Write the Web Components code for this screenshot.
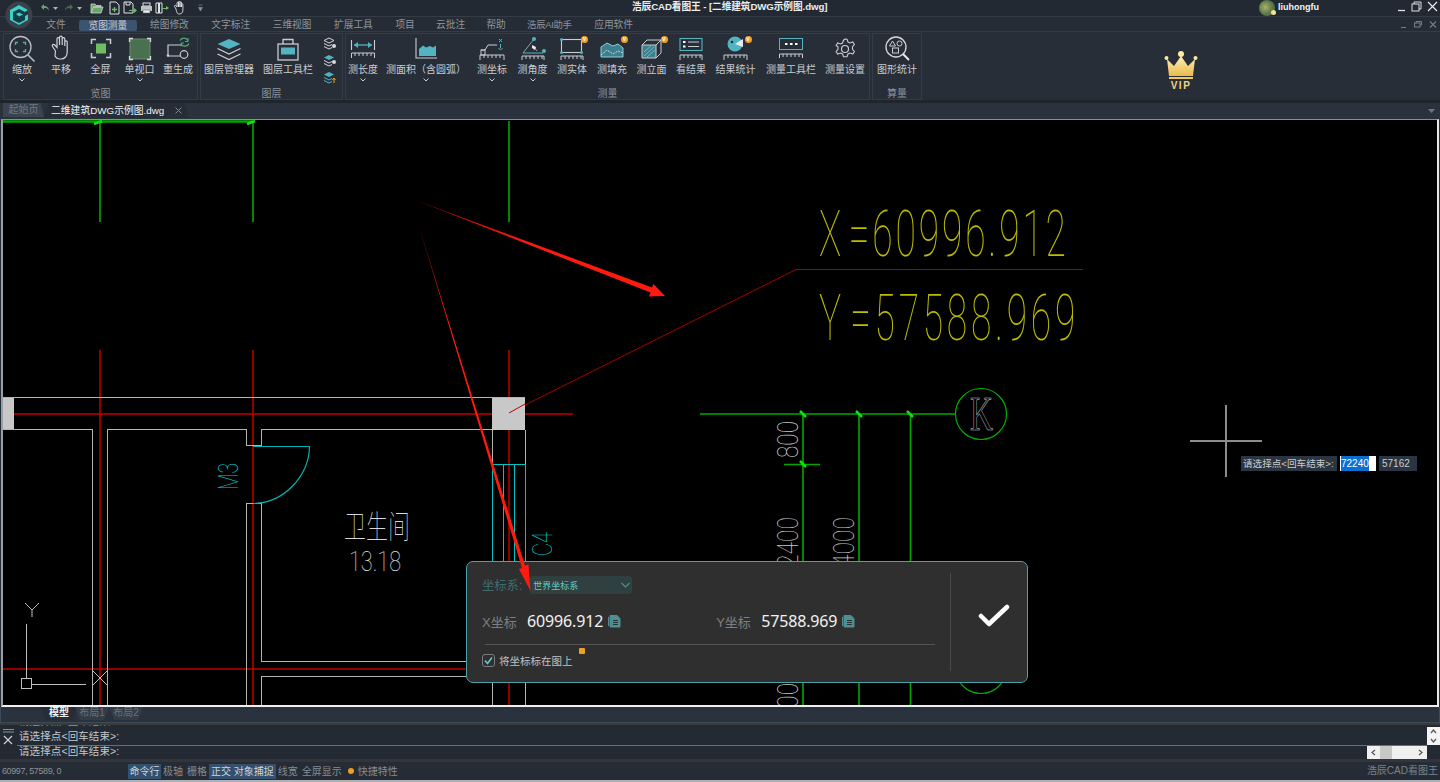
<!DOCTYPE html>
<html lang="zh"><head><meta charset="utf-8"><title>浩辰CAD看图王</title>
<style>
html,body{margin:0;height:100%;background:#262d37;overflow:hidden}
body{font:10px "Liberation Sans","Noto Sans CJK SC",sans-serif;color:#c4c8cd}
cad-app{height:782px}
svg{display:block}
</style></head><body>
<cad-app>
 <cad-titlebar title-text="浩辰CAD看图王 - [二维建筑DWG示例图.dwg]" user="liuhongfu"></cad-titlebar>
 <cad-menubar></cad-menubar>
 <cad-ribbon>
  <rb-group w="195" title="览图">
   <rb-btn w="38" caret>缩放<svg slot="icon" width="30" height="29" viewBox="0 0 30 29"><circle cx="13.500" cy="13" r="10.500" fill="none" stroke="#b9bec4" stroke-width="1.300"/><path d="M21 21l6.500 6.500" stroke="#b9bec4" stroke-width="1.600"/><path d="M8.500 11V8.500H11M16 8.500h2.500V11M18.500 15v2.500H16M11 17.500H8.500V15" fill="none" stroke="#4fb0a8" stroke-width="1.300"/></svg></rb-btn>
   <rb-btn w="40">平移<svg slot="icon" width="30" height="29" viewBox="0 0 30 29"><path d="M9.500 17l-3-4.500c-1-1.800 1-3 2.300-1.500l2.200 2.500V5c0-1.800 2.500-1.800 2.500 0v6-7.500c0-1.800 2.700-1.800 2.700 0V11 5c0-1.800 2.600-1.800 2.600 0v7-4c0-1.600 2.400-1.600 2.400 0v10c0 4-2.500 7-6 7h-1.500c-2.500 0-3.800-1.500-4.700-3z" fill="none" stroke="#cfd2d6" stroke-width="1.200"/></svg></rb-btn>
   <rb-btn w="39">全屏<svg slot="icon" width="30" height="29" viewBox="0 0 30 29"><path d="M5.500 10V5.500H10M20 5.500h4.500V10M24.500 19v4.500H20M10 23.500H5.500V19" fill="none" stroke="#c9cdd1" stroke-width="1.500"/><rect x="10" y="9.500" width="10" height="10" fill="#6fbd62"/></svg></rb-btn>
   <rb-btn w="39" caret>单视口<svg slot="icon" width="30" height="29" viewBox="0 0 30 29"><rect x="5" y="5" width="20" height="20" fill="#4b7050" stroke="#6c8a70"/><path d="M4.500 8V4.500H8M22 4.500h3.500V8M25.500 22v3.500H22M8 25.500H4.500V22" fill="none" stroke="#d5d8da" stroke-width="1.300"/></svg></rb-btn>
   <rb-btn w="38">重生成<svg slot="icon" width="30" height="29" viewBox="0 0 30 29"><path d="M19 11H5v11h13" fill="none" stroke="#c9cdd1" stroke-width="1.200"/><circle cx="21" cy="20.500" r="3.800" fill="none" stroke="#c9cdd1" stroke-width="1.200"/><circle cx="5" cy="21.500" r="1.300" fill="#c9cdd1"/><path d="M17 6.500a4.500 4.500 0 0 1 8 0M26 9.500a4.500 4.500 0 0 1-8 .5" fill="none" stroke="#4fb56a" stroke-width="1.300"/><path d="M25 4v3.500h-3M18 12v-3h3" fill="none" stroke="#4fa8b0" stroke-width="1"/></svg></rb-btn>
  </rb-group>
  <rb-group w="143" title="图层">
   <rb-btn w="58">图层管理器<svg slot="icon" width="30" height="29" viewBox="0 0 30 29"><path d="M15 5l11.500 5L15 15 3.500 10z" fill="#54b3c1"/><path d="M3.500 14.500L15 20l11.500-5.500M3.500 20L15 25.500 26.500 20" fill="none" stroke="#c9cdd1" stroke-width="1.300"/></svg></rb-btn>
   <rb-btn w="60">图层工具栏<svg slot="icon" width="30" height="29" viewBox="0 0 30 29"><rect x="5" y="10" width="20" height="16" fill="none" stroke="#c9cdd1" stroke-width="1.300"/><path d="M10 10V5.500h10V10" fill="none" stroke="#c9cdd1" stroke-width="1.300"/><rect x="8" y="13.500" width="14" height="7" fill="#54b3c1"/></svg></rb-btn>
   <rb-smalls></rb-smalls>
  </rb-group>
  <rb-group w="525" title="测量">
   <rb-btn w="36" caret>测长度<svg slot="icon" width="30" height="29" viewBox="0 0 30 29"><path d="M3.500 6v10M26.500 6v10" stroke="#c9cdd1" stroke-width="1.100"/><path d="M6 11h18" stroke="#54b3c1" stroke-width="1.300"/><path d="M6 11l4-3v6zM24 11l-4-3v6z" fill="#54b3c1"/><path d="M3.500 24v-5h23v5M7 19v3M11 19v3M15 19v3M19 19v3M23 19v3" fill="none" stroke="#c9cdd1"/></svg></rb-btn>
   <rb-btn w="90" caret>测面积（含圆弧）<svg slot="icon" width="30" height="29" viewBox="0 0 30 29"><path d="M5 4v20h21" fill="none" stroke="#c9cdd1" stroke-width="1.100"/><path d="M8 22V15l4-3.500 3 2 4-1.500 3 1.500 3-2V22z" fill="#54b3c1"/></svg></rb-btn>
   <rb-btn w="42" caret>测坐标<svg slot="icon" width="30" height="29" viewBox="0 0 30 29"><path d="M4 16h4l3-5h9" fill="none" stroke="#c9cdd1"/><path d="M22 5l3 3m0-3l-3 3M23.500 14v-4M21.500 14l2 2 2-2" fill="none" stroke="#54b3c1"/><rect x="4" y="16" width="4" height="5" fill="none" stroke="#c9cdd1"/><path d="M3 26v-5h24v5M7 21v3M11 21v3M15 21v3M19 21v3M23 21v3" fill="none" stroke="#c9cdd1"/></svg></rb-btn>
   <rb-btn w="39" caret>测角度<svg slot="icon" width="30" height="29" viewBox="0 0 30 29"><path d="M5 19L16 5M16 13l3 4" fill="none" stroke="#8fa3a8"/><circle cx="16" cy="5" r="2" fill="#54b3c1"/><circle cx="26" cy="17" r="2" fill="#54b3c1"/><path d="M14 11l4 2-1 3-3-2z" fill="#e8eaec"/><path d="M5 19h20" stroke="#54b3c1"/><path d="M4 26v-4h22v4M8 22v3M12 22v3M16 22v3M20 22v3M24 22v3" fill="none" stroke="#c9cdd1"/></svg></rb-btn>
   <rb-btn w="40" badge>测实体<svg slot="icon" width="30" height="29" viewBox="0 0 30 29"><rect x="4.500" y="5.500" width="20" height="13" fill="none" stroke="#c9cdd1" stroke-width="1.100"/><circle cx="4.500" cy="5.500" r="1.500" fill="#54b3c1"/><circle cx="4.500" cy="18.500" r="1.500" fill="#54b3c1"/><circle cx="24.500" cy="18.500" r="1.500" fill="#54b3c1"/><path d="M4 26v-4h22v4M8 22v3M12 22v3M16 22v3M20 22v3M24 22v3" fill="none" stroke="#c9cdd1"/></svg></rb-btn>
   <rb-btn w="40" badge>测填充<svg slot="icon" width="30" height="29" viewBox="0 0 30 29"><path d="M4 23V13l6-4 6 3 5-2 5 4v9z" fill="#3d7f8c" stroke="#8fd0d8"/><path d="M4 21l6-5 6 4 5-3 5 2" fill="none" stroke="#b9dfe4" stroke-dasharray="2 1"/></svg></rb-btn>
   <rb-btn w="39" badge>测立面<svg slot="icon" width="30" height="29" viewBox="0 0 30 29"><path d="M5 11h14v13H5z" fill="#3d7f8c" stroke="#c9cdd1"/><path d="M5 11l5-5h14v13l-5 5M19 11l5-5" fill="none" stroke="#c9cdd1"/><path d="M7 22l10-9M7 18l7-6M10 23l8-7" stroke="#8fd0d8" stroke-width=".7"/></svg></rb-btn>
   <rb-btn w="40">看结果<svg slot="icon" width="30" height="29" viewBox="0 0 30 29"><rect x="4" y="4.500" width="22" height="12" fill="none" stroke="#54b3c1" stroke-width="1.100"/><path d="M7 8h2.500M7 12.500h2.500" stroke="#fff" stroke-width="2"/><path d="M12 8h11M12 12.500h11" stroke="#c9cdd1"/><path d="M4 26v-5h22v5M8 21v3M12 21v3M16 21v3M20 21v3M24 21v3" fill="none" stroke="#c9cdd1"/></svg></rb-btn>
   <rb-btn w="49" badge>结果统计<svg slot="icon" width="30" height="29" viewBox="0 0 30 29"><circle cx="14" cy="10" r="7.500" fill="#54b3c1"/><path d="M14 10l8-5v8z" fill="#e8eaec"/><circle cx="11" cy="8" r="1.300" fill="#262d37"/><path d="M3 26v-5h23v5M7 21v3M11 21v3M15 21v3M19 21v3M23 21v3" fill="none" stroke="#c9cdd1"/></svg></rb-btn>
   <rb-btn w="62">测量工具栏<svg slot="icon" width="30" height="29" viewBox="0 0 30 29"><rect x="3.500" y="4.500" width="23" height="11" fill="none" stroke="#54b3c1"/><path d="M9 10h2.500M14 10h2.500M19 10h2.500" stroke="#fff" stroke-width="2.200"/><path d="M3.500 24v-4h23v4M7 20v3M11 20v3M15 20v3M19 20v3M23 20v3" fill="none" stroke="#c9cdd1"/></svg></rb-btn>
   <rb-btn w="46">测量设置<svg slot="icon" width="30" height="29" viewBox="0 0 30 29"><path d="M15 5l2 .2 1 2.800 2 1 2.800-1 1.600 2.500-1.900 2.200v2.600l1.900 2.200-1.600 2.500-2.800-1-2 1-1 2.800h-3.500l-1-2.800-2-1-2.800 1-1.600-2.500 1.900-2.200v-2.600L6.100 11.500l1.600-2.500 2.800 1 2-1 1-2.800z" fill="none" stroke="#c9cdd1" stroke-width="1.100"/><circle cx="15" cy="15" r="3.500" fill="none" stroke="#c9cdd1" stroke-width="1.200"/></svg></rb-btn>
  </rb-group>
  <rb-group w="50" title="算量">
   <rb-btn w="50">图形统计<svg slot="icon" width="30" height="29" viewBox="0 0 30 29"><circle cx="14" cy="13" r="10" fill="none" stroke="#d5d8da" stroke-width="1.300"/><path d="M21 20l6 6" stroke="#e8eaec" stroke-width="2"/><path d="M10.500 7l3 5h-6z" fill="none" stroke="#c9cdd1"/><circle cx="17.500" cy="9.500" r="2.500" fill="none" stroke="#c9cdd1"/><rect x="10.500" y="14" width="6" height="5" fill="none" stroke="#c9cdd1"/></svg></rb-btn>
  </rb-group>
  <vip-badge></vip-badge>
 </cad-ribbon>
 <cad-doctabs></cad-doctabs>
 <cad-canvas></cad-canvas>
 <cad-layouttabs></cad-layouttabs>
 <cad-cmdline></cad-cmdline>
 <cad-statusbar></cad-statusbar>
</cad-app>
<script>
const CJK='"Noto Sans CJK SC",sans-serif';
const def=(name,html,setup)=>customElements.define(name,class extends HTMLElement{
  connectedCallback(){ if(this.shadowRoot) return; const r=this.attachShadow({mode:'open'});
    r.innerHTML=typeof html==='function'?html(this):html; if(setup)setup(this,r);} });

def('cad-app',`<style>:host{display:flex;flex-direction:column;width:1440px;overflow:hidden}</style><slot></slot>`);

def('cad-titlebar',h=>`<style>
:host{display:flex;align-items:center;height:16px;background:#232932;position:relative;flex:none;border-bottom:1px solid #343c46;box-sizing:content-box}
.logo{position:absolute;left:4px;top:1px;z-index:3}
.qat{display:flex;align-items:center;padding-left:40px;gap:0;position:absolute;left:0;top:0;height:15px}
.qat svg{margin-right:2.500px}
.t{position:absolute;left:632px;top:0;line-height:13px;font-size:9.700px;font-weight:700;color:#eceef0;white-space:nowrap;letter-spacing:-.1px}
.u{position:absolute;left:1278px;top:0;font:700 9px/14px "Liberation Sans",sans-serif;color:#f2f4f6}
.av{position:absolute;left:1259px;top:0;width:16px;height:16px;border-radius:50%;background:radial-gradient(circle at 40% 45%,#aab26a 0,#5f7a4a 50%,#3c5a48 100%)}
.av:after{content:"";position:absolute;right:-1px;bottom:1px;width:5px;height:5px;border-radius:50%;background:#f5e48a}
.w{position:absolute;right:2px;top:1px;display:flex;gap:5px;align-items:center}
</style>
<svg class="logo" width="30" height="28" viewBox="0 0 30 28"><circle cx="15" cy="14" r="13.500" fill="#3a4149"/><path d="M15 4l9 5v10l-9 5-9-5V9z" fill="#143f46"/><path d="M15 4l9 5-3 2-6-3-6 3v8l6 3 6-3v-4l3-1.500V19l-9 5-9-5V9z" fill="#3fcfc9"/><path d="M12 13l3-1.500 4 2-4 2z" fill="#3fcfc9"/></svg>
<div class="qat">
<svg width="10" height="11" viewBox="0 0 10 11"><path d="M4 2L1 5l3 3V6c2 0 4 0 5 3 0-3-2-5-5-5z" fill="#6aa66a"/></svg>
<svg width="5" height="11" viewBox="0 0 5 11"><path d="M0 5h5L2.500 8z" fill="#aeb3b8"/></svg>
<svg style="margin-left:4px" width="10" height="11" viewBox="0 0 10 11"><path d="M6 2l3 3-3 3V6C4 6 2 6 1 9c0-3 2-5 5-5z" fill="#4d6a4f"/></svg>
<svg width="5" height="11" viewBox="0 0 5 11"><path d="M0 5h5L2.500 8z" fill="#aeb3b8"/></svg>
<svg style="margin-left:6px;margin-right:3.500px" width="14" height="12" viewBox="0 0 14 12"><path d="M1 11V2h4l1 1.500h5V5H3.500L1 11h10l2-6H3.500" fill="#6aa66a" stroke="#cfd3d6" stroke-width=".8"/></svg>
<svg width="13" height="14" viewBox="0 0 13 14"><path d="M2 1h6l3 3v9H2z" fill="none" stroke="#dfe2e4"/><path d="M6.500 6v5M4 8.500h5" stroke="#6fbd62" stroke-width="1.300"/></svg>
<svg width="14" height="14" viewBox="0 0 14 14"><path d="M1 1h7l2 2v9H1z" fill="none" stroke="#dfe2e4"/><path d="M3 1v3h4V1" fill="none" stroke="#dfe2e4"/><path d="M6 9h5V7l3 2.500L11 12v-2H6z" fill="#6fbd62"/></svg>
<svg width="13" height="12" viewBox="0 0 13 12"><rect x="3" y="1" width="7" height="3" fill="none" stroke="#dfe2e4"/><rect x="1" y="4" width="11" height="5" fill="#bfc3c7"/><rect x="3" y="8" width="7" height="3" fill="#eee" stroke="#555" stroke-width=".5"/></svg>
<svg width="14" height="12" viewBox="0 0 14 12"><path d="M1 1h6v10H1z" fill="none" stroke="#dfe2e4"/><path d="M3 1h2v10H3z" fill="#dfe2e4"/><path d="M7 6h4V4l3 2-3 2V7H7z" fill="#6fbd62"/></svg>
<svg style="margin-left:1px" width="13" height="14" viewBox="0 0 13 14"><path d="M3 8L1.500 5.500c-.5-1 .8-1.600 1.500-.8L4 6V2c0-1 1.500-1 1.500 0v4-5c0-1 1.500-1 1.500 0v5-4.500c0-1 1.500-1 1.500 0V6 3.500c0-1 1.400-1 1.400 0V9c0 2.500-1.500 4-3.400 4H6C4.500 13 3.800 12 3 8z" fill="none" stroke="#dfe2e4" stroke-width=".9"/></svg>
<svg style="margin-left:10px" width="5" height="8" viewBox="0 0 5 8"><path d="M.5 1h4M.5 3.500h4L2.500 7z" stroke="#8a9097" fill="#8a9097" stroke-width=".6"/></svg>
</div>
<div class="t">${h.getAttribute('title-text')}</div>
<div class="av"></div><div class="u">${h.getAttribute('user')}</div>
<div class="w">
<svg width="9" height="10" viewBox="0 0 9 10"><path d="M1 8.500h7" stroke="#dfe2e4" stroke-width="1.300"/></svg>
<svg width="11" height="11" viewBox="0 0 11 11"><path d="M3 3V1h7v7H8" fill="none" stroke="#dfe2e4"/><rect x="1" y="3" width="7" height="7" fill="none" stroke="#dfe2e4"/></svg>
<svg width="11" height="11" viewBox="0 0 11 11"><path d="M1 1l9 9M10 1l-9 9" stroke="#eef0f2" stroke-width="1.100"/></svg>
</div>`);

def('cad-menubar',`<style>
:host{display:flex;align-items:center;height:14px;padding:2px 0 0 35px;box-sizing:border-box;background:#262c36;flex:none;font-family:"Liberation Sans",${CJK};position:relative}
span{padding:0 11.300px;line-height:12px;color:#8e949b;font-size:9.700px;white-space:nowrap}
span.ai{font-size:9.400px;letter-spacing:-.3px}
span.on{background:#3d5470;color:#c4cbd2;padding:0 9.500px;margin:0 2px;border-radius:2px;height:11px;line-height:11px}
.w{position:absolute;right:3px;top:0;display:flex;gap:7px;align-items:center;height:14px}
</style>
<span>文件</span><span class="on">览图测量</span><span>绘图修改</span><span>文字标注</span><span>三维视图</span><span>扩展工具</span><span style="padding-right:10px">项目</span><span style="padding-right:10px">云批注</span><span style="padding-right:10px">帮助</span><span class="ai">浩辰AI助手</span><span>应用软件</span>
<div class="w">
<svg width="7" height="9" viewBox="0 0 7 9"><path d="M1 7.500h5" stroke="#777d84"/></svg>
<svg width="8" height="9" viewBox="0 0 8 9"><path d="M2 3V1.500h5.500V5H6" fill="none" stroke="#777d84"/><rect x=".5" y="3" width="5.500" height="4" fill="none" stroke="#777d84"/></svg>
<svg width="8" height="9" viewBox="0 0 8 9"><path d="M1 1.500l6 6M7 1.500l-6 6" stroke="#777d84" stroke-width="1.100"/></svg>
</div>`);

def('cad-ribbon',`<style>
:host{display:flex;gap:2px;height:72px;padding:1px 0 0 3px;box-sizing:border-box;background:#272e38;flex:none;border-top:1px solid #343c46;position:relative;border-bottom:3px solid #1f252d}
</style><slot></slot>`);

def('rb-group',h=>`<style>
:host{display:flex;flex-direction:column;width:${h.getAttribute('w')}px;height:67px;box-sizing:border-box;outline:1px solid #343c47;outline-offset:-1px}
.b{display:flex;flex:1;padding-top:1px;min-height:0}
.t{height:14px;line-height:16px;text-align:center;color:#8d939a;font-size:10px}
</style><div class="b"><slot></slot></div><div class="t">${h.getAttribute('title')}</div>`);

def('rb-btn',h=>`<style>
:host{display:flex;flex-direction:column;align-items:center;width:${h.getAttribute('w')}px;position:relative;flex:none}
.i{height:29px;display:flex;align-items:center;justify-content:center;position:relative;width:30px}
.l{height:14px;line-height:14px;font-size:10px;color:#c8ccd1;white-space:nowrap}
.c{height:4px;margin-top:1px}
.bd{position:absolute;right:-1px;top:2px;width:7px;height:7px;border-radius:50%;background:#f0a020;color:#fff;font:700 5px/7px "Liberation Sans",sans-serif;text-align:center}
</style><div class="i"><slot name="icon"></slot>${h.hasAttribute('badge')?'<div class="bd">V</div>':''}</div>
<div class="l"><slot></slot></div>
${h.hasAttribute('caret')?'<svg class="c" width="6" height="4" viewBox="0 0 6 4"><path d="M.5 .5L3 3 5.500 .5" fill="none" stroke="#c8ccd1"/></svg>':''}`);

def('rb-smalls',`<style>:host{display:flex;flex-direction:column;align-items:center;width:24px;padding-top:3px;gap:3px}</style>
<svg width="14" height="14" viewBox="0 0 14 14"><path d="M6 1l5 2.500L6 6 1 3.500z" fill="none" stroke="#d5d8da"/><path d="M1 6.500L6 9l3-1.500M1 9.500L6 12l3-1.500" fill="none" stroke="#d5d8da"/><circle cx="11" cy="9" r="2" fill="#d5d8da"/></svg>
<svg width="14" height="14" viewBox="0 0 14 14"><path d="M6 1l5 2.500L6 6 1 3.500z" fill="#54b3c1"/><path d="M1 6.500L6 9l3-1.500M1 9.500L6 12l3-1.500" fill="none" stroke="#d5d8da"/><circle cx="11" cy="8" r="2" fill="#d5d8da"/></svg>
<svg width="14" height="14" viewBox="0 0 14 14"><path d="M6 1l5 2.500L6 6 1 3.500z" fill="#54b3c1"/><path d="M1 6.500L6 9l3-1.500M1 9.500L6 12l3-1.500" fill="none" stroke="#54b3c1"/><path d="M11 7v5M9.500 9L11 7l1.500 2" stroke="#f0a020" fill="none"/></svg>`);

def('vip-badge',`<style>
:host{position:absolute;left:1161px;top:19px;width:40px;display:flex;flex-direction:column;align-items:center}
span{font:700 10px/10px "Liberation Sans",sans-serif;letter-spacing:1.500px;color:#f3d37c;margin-top:1px}
</style>
<svg width="34" height="29" viewBox="0 0 34 29"><defs><linearGradient id="g" x1="0" y1="0" x2="0" y2="1"><stop offset="0" stop-color="#fff0b8"/><stop offset="1" stop-color="#e9b94c"/></linearGradient></defs>
<path d="M3 8l7 7 7-10 7 10 7-7-2 17H5z" fill="url(#g)"/><circle cx="2.500" cy="7" r="2" fill="#fde9a8"/><circle cx="17" cy="3" r="3" fill="#fde9a8"/><circle cx="31.500" cy="7" r="2" fill="#fde9a8"/><rect x="5" y="26" width="24" height="2" fill="#f0c860"/></svg>
<span>VIP</span>`);

def('cad-doctabs',`<style>
:host{display:flex;align-items:flex-start;height:16px;background:#2a323d;flex:none;position:relative;padding-left:3px;font-family:"Liberation Sans",${CJK}}
.a{width:41px;height:14px;line-height:14px;background:#3a4350;color:#737a82;text-align:center;font-size:10px;clip-path:polygon(0 0,92% 0,100% 100%,0 100%);box-sizing:border-box}
.b{display:flex;align-items:center;height:15px;width:145px;background:#262d37;color:#f2f3f4;font-size:9.800px;line-height:14px;padding-left:7px;box-sizing:border-box;clip-path:polygon(3% 0,97% 0,100% 100%,0 100%);gap:10px;white-space:nowrap}
.d{position:absolute;right:5px;top:6px}
</style><div class="a">起始页</div><div class="b">二维建筑DWG示例图.dwg<svg width="9" height="9" viewBox="0 0 9 9"><path d="M1.500 1.500l6 6M7.500 1.500l-6 6" stroke="#848a91"/></svg></div>
<svg class="d" width="7" height="5" viewBox="0 0 7 5"><path d="M0 0h7L3.500 4z" fill="#6f767d"/></svg>`);

const thin='font-family:Roboto,"Liberation Sans",sans-serif;font-weight:100';
def('cad-canvas',`<style>
:host{display:block;position:relative;height:588px;flex:none;background:#000;box-sizing:border-box;border-top:1px solid #8a8f94;border-left:2px solid #9aa0a6;border-right:2px solid #e6e8ea;border-bottom:2px solid #f0f0f0;margin-left:1px;margin-right:1px;overflow:hidden}
svg{position:absolute;left:-3px;top:-120px;width:1440px;height:782px}
.over{pointer-events:none}
text{${thin}}
.cj{font-family:"Noto Sans CJK SC",sans-serif;font-weight:100}
coord-dialog{position:absolute;left:463px;top:441px}
dyn-input{position:absolute;left:1238px;top:336px}
</style>
<svg viewBox="0 0 1440 782">
 <g fill="none" stroke-width="1">
  <g stroke="#00a800" stroke-width="1.600"><path d="M100 121V222M253 121V222M509 121V222"/><path d="M3 121.500H253" stroke-width="2.500"/><path d="M700 414H955M803 414V706M859 414V706M910.500 414V706M784 464.500H820"/></g>
  <g stroke="#c00000" stroke-width="1.500"><path d="M100 350V706M253 350V706M509 350V397M3 414H573M3 669H470M509 430V706"/></g>
  <path d="M509 413L796 269.500H1083" stroke="#b00000"/>
  <rect x="3" y="397" width="11" height="33" fill="#c8c8c8" stroke="none"/>
  <rect x="492" y="397" width="33" height="33" fill="#c8c8c8" stroke="none"/>
  <path d="M509 413l16-9" stroke="#c00000"/>
  <g stroke="#b4b4b4" shape-rendering="crispEdges"><path d="M3 397.500H525M3 429.500H92.500V706M107.500 706V429.500H246.500V445.500H261.500V429.500H492M246.500 706V503.500H261.500V661.500H480M261.500 706V676.500H480M492.500 430V464M525.500 430V464M492.500 565V706M525.500 565V706"/></g>
  <g stroke="#00c4c4" shape-rendering="crispEdges"><path d="M492.500 464.500H525M492.500 464V565M503.500 464V565M514.500 464V565M525.500 464V565"/></g>
  <path d="M253 446.500H309.500C309 475 285 503 253 503.500" stroke="#00b4b4" stroke-width="1.200"/>
  <g stroke="#c0c0c0" shape-rendering="crispEdges"><path d="M26.500 624V678M32 684.500H86"/><rect x="21.500" y="678.500" width="10" height="10"/></g>
  <g stroke="#c0c0c0"><path d="M25 603l7 7 7-7M32 610v7M93 671l14 14M107 671l-14 14"/></g>
  <circle cx="981" cy="414" r="25.500" stroke="#00b000" stroke-width="1.200"/>
  <circle cx="981" cy="668" r="25.500" stroke="#00b000" stroke-width="1.200"/>
  <g stroke="#12e012" stroke-width="2.500"><path d="M800 411l6 6M856 411l6 6M907 411l6 6M800 461l6 6M94 124l8-3M247 124l8-3"/></g>
 </g>
 <g fill="#c8c8c8">
  <text class="cj" x="344" y="538" font-size="32" textLength="66" lengthAdjust="spacingAndGlyphs" fill="#d8d8d8">卫生间</text>
  <text x="349" y="571" font-size="27" textLength="52" lengthAdjust="spacingAndGlyphs" fill="#e0e0e0">13.18</text>
  <text transform="translate(238,490) rotate(-90)" font-size="28" textLength="27" lengthAdjust="spacingAndGlyphs" fill="#00c8c8">M3</text>
  <text transform="translate(552,556) rotate(-90)" font-size="28" textLength="24" lengthAdjust="spacingAndGlyphs" fill="#00c8c8">C4</text>
  <g fill="#bcbc00">
   <text transform="translate(819,256) scale(.58,1)" font-size="64" letter-spacing="5">X<tspan dx="8">=</tspan>60996.912</text>
   <text transform="translate(819,340) scale(.58,1)" font-size="64" letter-spacing="6.500">Y<tspan dx="9">=</tspan>57588.969</text>
  </g>
  <text x="970" y="430" font-size="48" style='font-family:"Liberation Serif",serif;font-weight:400' fill="none" stroke="#d0d0d0" stroke-width=".6" textLength="23" lengthAdjust="spacingAndGlyphs">K</text>
  <text transform="translate(798,458) rotate(-90)" font-size="29" textLength="37" lengthAdjust="spacingAndGlyphs">800</text>
  <text transform="translate(798,567) rotate(-90)" font-size="29" textLength="50" lengthAdjust="spacingAndGlyphs">2400</text>
  <text transform="translate(854,567) rotate(-90)" font-size="29" textLength="50" lengthAdjust="spacingAndGlyphs">4000</text>
  <text transform="translate(798,720) rotate(-90)" font-size="29" textLength="37" lengthAdjust="spacingAndGlyphs">800</text>
 </g>
 <g stroke="#8c8c8c" stroke-width="2" shape-rendering="crispEdges"><path d="M1190 441H1262M1226 405V477"/></g>
</svg>
<coord-dialog></coord-dialog>
<dyn-input></dyn-input>
<svg class="over" viewBox="0 0 1440 782"><defs>
 <linearGradient id="a1" gradientUnits="userSpaceOnUse" x1="415" y1="200" x2="530" y2="244"><stop offset="0" stop-color="#900000"/><stop offset="1" stop-color="#ff1a10"/></linearGradient>
 <linearGradient id="a2" gradientUnits="userSpaceOnUse" x1="417" y1="220" x2="455" y2="340"><stop offset="0" stop-color="#900000"/><stop offset="1" stop-color="#ff1a10"/></linearGradient></defs>
 <path d="M415 200L652 287.500 653.500 284 665 296 649 296.500 650.500 292.500z" fill="url(#a1)"/>
 <path d="M417 220L525 565.500 528.500 564.500 530.500 591 519 569 522 568z" fill="url(#a2)"/>
</svg>`);

def('coord-dialog',`<style>
:host{display:flex;box-sizing:border-box;width:562px;height:122px;background:#2f2f2f;border:1px solid #4aa3a8;border-radius:7px;font-family:"Liberation Sans",${CJK};color:#8a8a8a}
.m{width:483px;padding:14px 15px 0 15px;box-sizing:border-box;flex:none}
.r1{display:flex;align-items:center;height:18px;font-size:12.300px;color:#3f6e6e;white-space:nowrap}
.sel{margin-left:8px;width:102px;height:18px;background:#303f3f;border-radius:3px;display:flex;align-items:center;justify-content:space-between;padding:0 1px 0 3px;box-sizing:border-box;color:#62cdcd;font-size:9px;flex:none}
.r2{display:flex;align-items:center;height:26px;margin-top:14px;font-size:13px}
.lab{color:#7f7f7f;width:45px}
.val{font:16px/26px "Noto Sans",sans-serif;color:#f2f2f2;letter-spacing:-.15px}
.y{margin-left:95px}
.cp{margin-left:5px}
.hr{height:1px;background:#555;margin:10px 0 0 3px;width:450px}
.r3{display:flex;align-items:center;height:14px;margin-top:8px;font-size:10.500px;color:#c2c2c2;position:relative;gap:4px}
.bd{position:absolute;left:97px;top:-5px;width:6px;height:6px;background:#f0a020;border-radius:1px}
.v{width:1px;height:98px;background:#4a4a4a;margin-top:11px;flex:none}
.ok{flex:1;display:flex;align-items:center;justify-content:center;padding-bottom:12px;padding-left:10px}
</style>
<div class="m">
 <div class="r1">坐标系:<div class="sel"><span>世界坐标系</span><svg width="11" height="7" viewBox="0 0 11 7"><path d="M1.500 1l4 4 4-4" fill="none" stroke="#4f8f8f" stroke-width="1.200"/></svg></div></div>
 <div class="r2"><span class="lab">X坐标</span><span class="val">60996.912</span>
  <svg class="cp" width="13" height="14" viewBox="0 0 13 14"><path d="M2 1.500h7l3 3V13H2z" fill="#4f8f94" stroke="#4f8f94"/><path d="M0.500 3v9" stroke="#4f8f94"/><path d="M5 6.500h5M5 8.500h5M5 10.500h5" stroke="#2f2f2f"/></svg>
  <span class="lab y">Y坐标</span><span class="val">57588.969</span>
  <svg class="cp" width="13" height="14" viewBox="0 0 13 14"><path d="M2 1.500h7l3 3V13H2z" fill="#4f8f94" stroke="#4f8f94"/><path d="M0.500 3v9" stroke="#4f8f94"/><path d="M5 6.500h5M5 8.500h5M5 10.500h5" stroke="#2f2f2f"/></svg>
 </div>
 <div class="hr"></div>
 <div class="r3"><svg width="13" height="13" viewBox="0 0 13 13"><rect x=".5" y=".5" width="12" height="12" rx="2.500" fill="none" stroke="#7d7d7d"/><path d="M3 6.500l2.500 3L10 3.500" fill="none" stroke="#62cdd5" stroke-width="1.500"/></svg>将坐标标在图上<div class="bd"></div></div>
</div>
<div class="v"></div>
<div class="ok"><svg width="32" height="24" viewBox="0 0 32 24"><path d="M3 12l8 8L29 3" fill="none" stroke="#fff" stroke-width="4.500" stroke-linecap="round" stroke-linejoin="round"/></svg></div>`);

def('dyn-input',`<style>
:host{display:flex;height:15px;font:10px/15px "Liberation Sans",${CJK};color:#c8ccd0;gap:3px}
.a{width:96px;background:#2b3541;padding-left:2px;box-sizing:border-box;white-space:nowrap;overflow:hidden;font-size:9.600px}
.b{width:36px;background:#fff;padding:0 1px;box-sizing:border-box}
.b span{background:#0a6fd0;color:#fff;display:inline-block;width:28px;height:15px}
.c{width:38px;background:#2b3541;padding-left:3px;box-sizing:border-box}
</style><div class="a">请选择点&lt;回车结束&gt;:</div><div class="b"><span>72240</span></div><div class="c">57162</div>`);

def('cad-layouttabs',`<style>
:host{display:flex;height:16px;flex:none;background:#2a323d;padding-left:39px;border-bottom:1px solid #3c4a58;border-left:1px solid #3c4a58;border-right:1px solid #3c4a58;box-sizing:border-box;font-family:"Liberation Sans",${CJK};font-size:10px;align-items:flex-start}
div{height:13px;line-height:12px;text-align:center;color:#6b727a;clip-path:polygon(0 0,100% 0,85% 100%,15% 100%)}
.on{width:38px;background:#262d37;color:#f0f2f3;font-weight:700}
.o{width:34px;background:#343c48}
.o.f{margin-left:-3px}
</style><div class="on">模型</div><div class="o f">布局1</div><div class="o">布局2</div>`);

def('cad-cmdline',`<style>
:host{display:block;height:39px;flex:none;background:#232a33;border-top:2px solid #3a3a38;border-bottom:3px solid #33353a;box-sizing:border-box;position:relative;font:10.500px/13px "Liberation Sans",${CJK};color:#c4c8cc;overflow:hidden}
.l{position:absolute;left:19px;white-space:nowrap;letter-spacing:.1px}
.sep{position:absolute;left:17px;right:13px;top:20px;height:1px;background:#6a6f74}
.ic{position:absolute;left:2px;top:2px}
.vs{position:absolute;right:0;top:2px;width:13px;height:18px;background:#f4f4f4;display:flex;flex-direction:column;align-items:center;justify-content:space-around}
.hs{position:absolute;right:13px;top:21px;width:60px;height:13px;background:#f0f0f0;display:flex;align-items:center;justify-content:space-between;padding:0 4px;box-sizing:border-box}
.th{position:absolute;left:13px;top:0;width:12px;height:13px;background:#c8c8c8}
</style>
<svg class="ic" width="14" height="22" viewBox="0 0 14 22"><path d="M1 2.500h11M1 5h11" stroke="#8a9097"/><path d="M2 9l8 8M10 9l-8 8" stroke="#d5d8da" stroke-width="1.100"/></svg>
<div class="l" style="top:-10px;color:#8d9298">请选择点&lt;回车结束&gt;:</div>
<div class="l" style="top:5px">请选择点&lt;回车结束&gt;:</div>
<div class="sep"></div>
<div class="l" style="top:20px">请选择点&lt;回车结束&gt;:</div>
<div class="vs"><svg width="7" height="5" viewBox="0 0 7 5"><path d="M1 4l2.500-3L6 4" fill="none" stroke="#555" stroke-width="1.200"/></svg><svg width="7" height="5" viewBox="0 0 7 5"><path d="M1 1l2.500 3L6 1" fill="none" stroke="#555" stroke-width="1.200"/></svg></div>
<div class="hs"><svg width="5" height="7" viewBox="0 0 5 7"><path d="M4 1L1 3.500 4 6" fill="none" stroke="#555" stroke-width="1.200"/></svg><div class="th"></div><svg width="5" height="7" viewBox="0 0 5 7"><path d="M1 1l3 2.500L1 6" fill="none" stroke="#555" stroke-width="1.200"/></svg></div>`);

def('cad-statusbar',`<style>
:host{display:flex;align-items:center;height:18px;flex:none;background:#252c36;font:10px/18px "Liberation Sans",${CJK};color:#858b92;position:relative;padding-left:2px;white-space:nowrap;border-bottom:2px solid #aeb2b6}
.p{width:126px;color:#8d9399;font-size:9px;letter-spacing:-.4px;flex:none}
.i{padding:0 2px;height:15px;line-height:15px}
.on{background:#33506e;color:#cfd6dd}
.g{display:flex;align-items:center}
.dot{width:6px;height:6px;border-radius:50%;background:#f0a020;margin:0 2px 0 4px}
.r{position:absolute;right:2px;top:0;color:#7d838a}
</style>
<div class="p">60997, 57589, 0</div>
<div class="g"><span class="i on" style="padding:0 1.500px">命令行</span><span class="i">极轴</span><span class="i">栅格</span><span class="i on">正交&nbsp;对象捕捉</span><span class="i">线宽</span><span class="i">全屏显示</span><span class="dot"></span><span class="i">快捷特性</span></div>
<div class="r">浩辰CAD看图王</div>`);
</script>
</body></html>
